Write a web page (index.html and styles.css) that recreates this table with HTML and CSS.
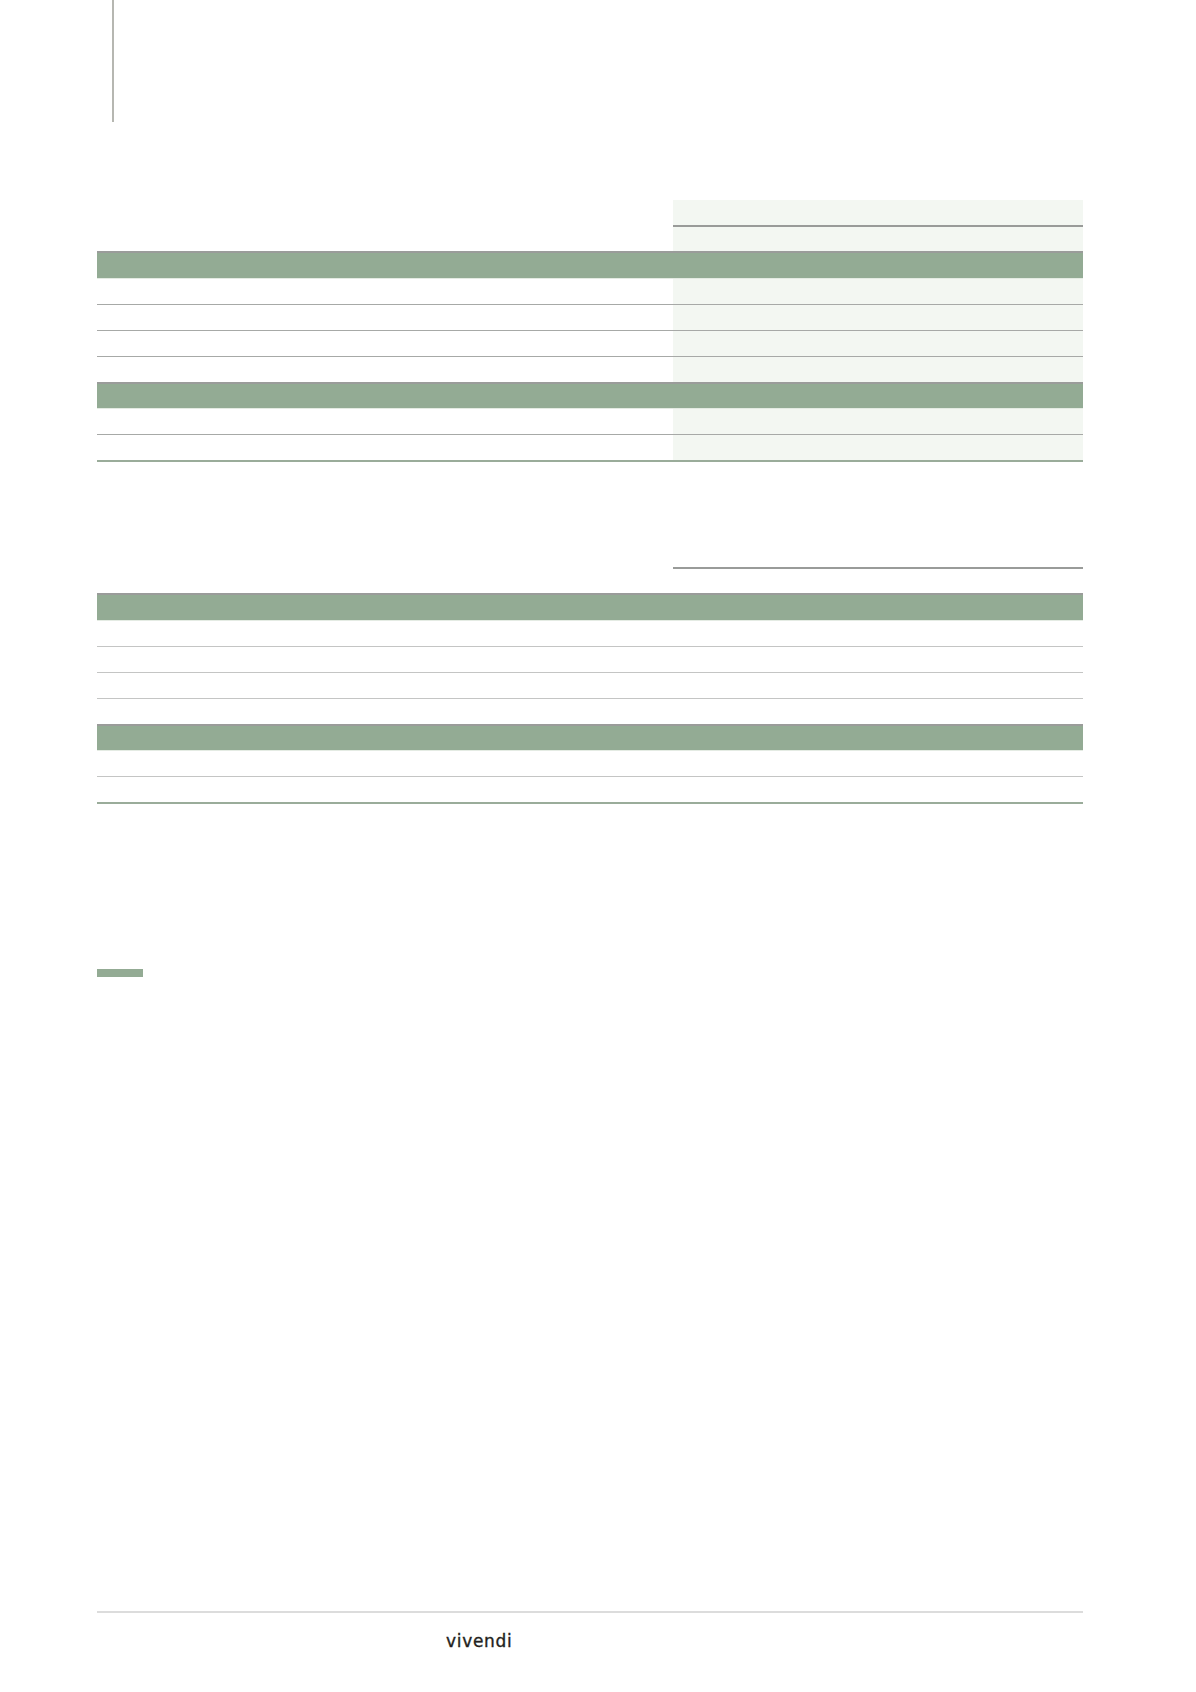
FILE: index.html
```html
<!DOCTYPE html>
<html lang="fr">
<head>
<meta charset="utf-8">
<title>Vivendi</title>
<link rel="stylesheet" href="styles.css">
</head>
<body>
<div class="page">
  <div class="rule-v"></div>

  <section class="tbl tbl-shaded t1">
    <div class="row head1"><div class="c"></div><div class="c"></div><div class="c s hl"></div><div class="c s hl"></div><div class="c s hl"></div><div class="c s hl"></div></div>
    <div class="row head2"><div class="c"></div><div class="c"></div><div class="c s"></div><div class="c s"></div><div class="c s"></div><div class="c s"></div></div>
    <div class="band"></div>
    <div class="row line"><div class="c"></div><div class="c"></div><div class="c s"></div><div class="c s"></div><div class="c s"></div><div class="c s"></div></div>
    <div class="row line"><div class="c"></div><div class="c"></div><div class="c s"></div><div class="c s"></div><div class="c s"></div><div class="c s"></div></div>
    <div class="row line"><div class="c"></div><div class="c"></div><div class="c s"></div><div class="c s"></div><div class="c s"></div><div class="c s"></div></div>
    <div class="row plain"><div class="c"></div><div class="c"></div><div class="c s"></div><div class="c s"></div><div class="c s"></div><div class="c s"></div></div>
    <div class="band band2"></div>
    <div class="row line"><div class="c"></div><div class="c"></div><div class="c s"></div><div class="c s"></div><div class="c s"></div><div class="c s"></div></div>
    <div class="row last"><div class="c"></div><div class="c"></div><div class="c s"></div><div class="c s"></div><div class="c s"></div><div class="c s"></div></div>
  </section>

  <section class="tbl t2">
    <div class="row head1"><div class="c"></div><div class="c"></div><div class="c hl"></div><div class="c hl"></div><div class="c hl"></div><div class="c hl"></div></div>
    <div class="row head2"><div class="c"></div><div class="c"></div><div class="c"></div><div class="c"></div><div class="c"></div><div class="c"></div></div>
    <div class="band"></div>
    <div class="row line"><div class="c"></div><div class="c"></div><div class="c"></div><div class="c"></div><div class="c"></div><div class="c"></div></div>
    <div class="row line"><div class="c"></div><div class="c"></div><div class="c"></div><div class="c"></div><div class="c"></div><div class="c"></div></div>
    <div class="row line"><div class="c"></div><div class="c"></div><div class="c"></div><div class="c"></div><div class="c"></div><div class="c"></div></div>
    <div class="row plain"><div class="c"></div><div class="c"></div><div class="c"></div><div class="c"></div><div class="c"></div><div class="c"></div></div>
    <div class="band band2"></div>
    <div class="row line"><div class="c"></div><div class="c"></div><div class="c"></div><div class="c"></div><div class="c"></div><div class="c"></div></div>
    <div class="row last"><div class="c"></div><div class="c"></div><div class="c"></div><div class="c"></div><div class="c"></div><div class="c"></div></div>
  </section>

  <div class="marker"></div>

  <footer class="footer">
    <div class="footer-logo">vivendi</div>
  </footer>
</div>
</body>
</html>
```

FILE: styles.css
```css
html, body {
  margin: 0;
  padding: 0;
  background: #ffffff;
}

.page {
  width: 986px;
  padding-left: 97px;
  height: 1692px;
  font-family: "DejaVu Sans", "Open Sans", sans-serif;
  box-sizing: content-box;
}

.rule-v {
  margin-left: 15px;
  width: 2px;
  height: 122px;
  background: #b6b7b1;
}

.tbl {
  width: 986px;
}

.t1 {
  margin-top: 78px;
}

.t2 {
  margin-top: 80px;
}

.row {
  display: grid;
  grid-template-columns: 473px 103px 102px 102px 103px 103px;
  box-sizing: border-box;
}

.c {
  box-sizing: border-box;
}

.s {
  background: #f3f7f2;
}

.head1 {
  height: 27px;
}

.head1 .c {
  height: 27px;
}

.head1 .hl {
  border-bottom: 2px solid #999b99;
}

.head2 {
  height: 24px;
}

.band {
  height: 28px;
  box-sizing: border-box;
  border-top: 2px solid #9a9c9a;
  border-bottom: 1px solid #e4ebe3;
  background: #93ab94;
}

.band2 {
  height: 27px;
}

.line {
  height: 26px;
  border-bottom: 1px solid #a7a9a7;
}

.t2 .line {
  border-bottom-color: #c4c5c4;
}

.plain {
  height: 25px;
}

.last {
  height: 27px;
  border-bottom: 2px solid #9aac9a;
}

.marker {
  margin-top: 165px;
  width: 46px;
  height: 8px;
  background: #93ab94;
}

.footer {
  margin-top: 634px;
  border-top: 2px solid #dcdcdc;
  padding-top: 20px;
}

.footer-logo {
  margin-left: 349px;
  font-family: "DejaVu Sans", sans-serif;
  font-size: 17px;
  line-height: 17px;
  letter-spacing: 0.7px;
  -webkit-text-stroke: 0.35px #231f20;
  color: #231f20;
}
```
